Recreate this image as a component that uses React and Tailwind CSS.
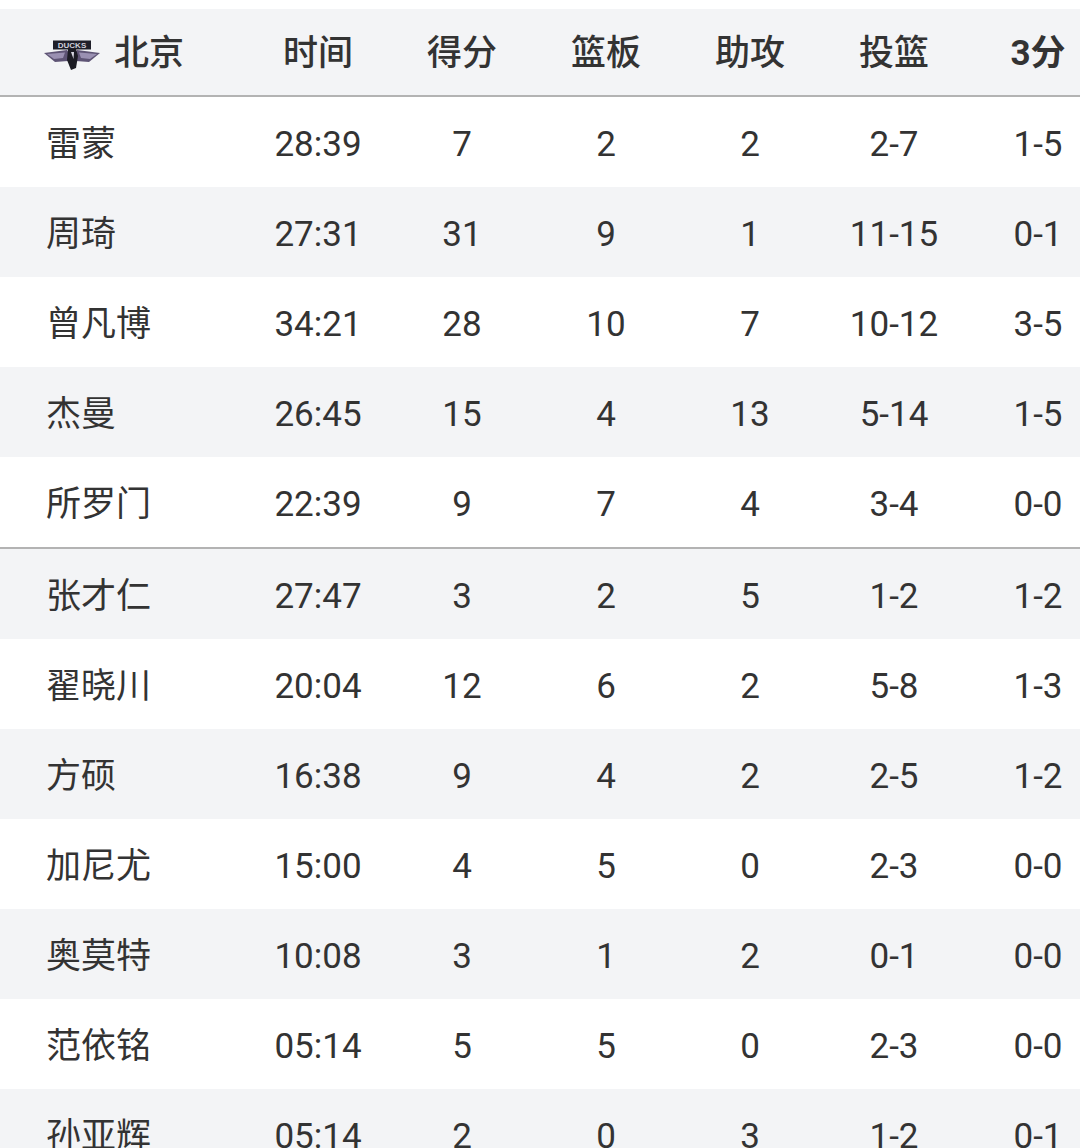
const columns = ["时间", "得分", "篮板", "助攻", "投篮", "3分"];

const starters = [
  ["雷蒙", "28:39", "7", "2", "2", "2-7", "1-5"],
  ["周琦", "27:31", "31", "9", "1", "11-15", "0-1"],
  ["曾凡博", "34:21", "28", "10", "7", "10-12", "3-5"],
  ["杰曼", "26:45", "15", "4", "13", "5-14", "1-5"],
  ["所罗门", "22:39", "9", "7", "4", "3-4", "0-0"],
];

const bench = [
  ["张才仁", "27:47", "3", "2", "5", "1-2", "1-2"],
  ["翟晓川", "20:04", "12", "6", "2", "5-8", "1-3"],
  ["方硕", "16:38", "9", "4", "2", "2-5", "1-2"],
  ["加尼尤", "15:00", "4", "5", "0", "2-3", "0-0"],
  ["奥莫特", "10:08", "3", "1", "2", "0-1", "0-0"],
  ["范依铭", "05:14", "5", "5", "0", "2-3", "0-0"],
  ["孙亚辉", "05:14", "2", "0", "3", "1-2", "0-1"],
];

// small Anaheim-style wings logo next to the team name
function DucksLogo() {
  return (
    <svg width="56" height="30" viewBox="0 0 56 30" className="shrink-0">
      <rect x="9" y="0.5" width="38" height="9" fill="#1f1f29" />
      <text x="28" y="8" textAnchor="middle" fontSize="8" fontWeight="700" fill="#cfcfdb" fontFamily="Liberation Sans, sans-serif">DUCKS</text>
      <path d="M0 13 L23 10 L26 15 L24 21 L11 22 Z" fill="#5e5475" />
      <path d="M56 13 L33 10 L30 15 L32 21 L45 22 Z" fill="#5e5475" />
      <path d="M3 14 L21 12.5 L19 18 L10 19 Z" fill="#9a90b2" />
      <path d="M53 14 L35 12.5 L37 18 L46 19 Z" fill="#9a90b2" />
      <path d="M24 9 L32 9 L34 16 L32 28 L27 30 L23 20 Z" fill="#1c1c24" />
      <path d="M27 12 L30 12 L29.5 19 Z" fill="#d8d8e2" />
    </svg>
  );
}

function Row({ row, shaded }) {
  return (
    <div className={`grid h-[90px] grid-cols-[246px_repeat(6,144px)] items-center pt-[6px] ${shaded ? "bg-[#f3f4f6]" : "bg-white"}`}>
      <div className="pl-[46px]">{row[0]}</div>
      {row.slice(1).map((cell, i) => (
        <div key={i} className="text-center">{cell}</div>
      ))}
    </div>
  );
}

export default function App() {
  return (
    <div className="h-[1148px] w-[1080px] overflow-hidden bg-white pt-[9px] font-[Roboto,'Noto_Sans_CJK_SC',sans-serif] text-[35px] text-[#333]">
      <div className="w-[1110px]">
        <div className="grid h-[88px] grid-cols-[246px_repeat(6,144px)] items-center border-b-2 border-[#b3b3b3] bg-[#f3f4f6] pt-[5px] font-medium">
          <div className="flex items-center gap-[14px] pl-[44px]">
            <DucksLogo />
            <span>北京</span>
          </div>
          {columns.map((c) => (
            <div key={c} className={`text-center ${c === "3分" ? "font-bold" : ""}`}>{c}</div>
          ))}
        </div>
        <div className="border-b-2 border-[#b3b3b3]">
          {starters.map((row, i) => (
            <Row key={row[0]} row={row} shaded={i % 2 === 1} />
          ))}
        </div>
        <div>
          {bench.map((row, i) => (
            <Row key={row[0]} row={row} shaded={i % 2 === 0} />
          ))}
        </div>
      </div>
    </div>
  );
}
